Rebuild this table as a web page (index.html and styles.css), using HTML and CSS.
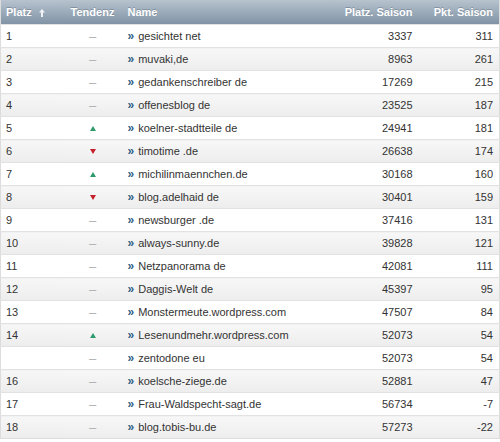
FILE: index.html
```html
<!DOCTYPE html>
<html>
<head>
<meta charset="utf-8">
<link rel="stylesheet" href="styles.css">
</head>
<body>
<table class="rank">
  <colgroup>
    <col class="c-platz"><col class="c-tend"><col class="c-name"><col class="c-ps"><col class="c-pkt">
  </colgroup>
  <thead>
    <tr>
      <th class="platz">Platz <svg class="sort" width="6" height="8" viewBox="0 0 6 8"><path d="M3 0 L6 3.5 L4 3.5 L4 8 L2 8 L2 3.5 L0 3.5 Z" fill="#fff" opacity="0.85"/></svg></th>
      <th class="tend">Tendenz</th>
      <th class="name">Name</th>
      <th class="num ps">Platz. Saison</th>
      <th class="num last">Pkt. Saison</th>
    </tr>
  </thead>
  <tbody>
    <tr><td>1</td><td class="tend"><span class="dash">–</span></td><td class="name"><span class="go">»</span>gesichtet net</td><td class="num ps">3337</td><td class="num last">311</td></tr>
    <tr><td>2</td><td class="tend"><span class="dash">–</span></td><td class="name"><span class="go">»</span>muvaki,de</td><td class="num ps">8963</td><td class="num last">261</td></tr>
    <tr><td>3</td><td class="tend"><span class="dash">–</span></td><td class="name"><span class="go">»</span>gedankenschreiber de</td><td class="num ps">17269</td><td class="num last">215</td></tr>
    <tr><td>4</td><td class="tend"><span class="dash">–</span></td><td class="name"><span class="go">»</span>offenesblog de</td><td class="num ps">23525</td><td class="num last">187</td></tr>
    <tr><td>5</td><td class="tend"><span class="up"></span></td><td class="name"><span class="go">»</span>koelner-stadtteile de</td><td class="num ps">24941</td><td class="num last">181</td></tr>
    <tr><td>6</td><td class="tend"><span class="down"></span></td><td class="name"><span class="go">»</span>timotime .de</td><td class="num ps">26638</td><td class="num last">174</td></tr>
    <tr><td>7</td><td class="tend"><span class="up"></span></td><td class="name"><span class="go">»</span>michilinmaennchen.de</td><td class="num ps">30168</td><td class="num last">160</td></tr>
    <tr><td>8</td><td class="tend"><span class="down"></span></td><td class="name"><span class="go">»</span>blog.adelhaid de</td><td class="num ps">30401</td><td class="num last">159</td></tr>
    <tr><td>9</td><td class="tend"><span class="dash">–</span></td><td class="name"><span class="go">»</span>newsburger .de</td><td class="num ps">37416</td><td class="num last">131</td></tr>
    <tr><td>10</td><td class="tend"><span class="dash">–</span></td><td class="name"><span class="go">»</span>always-sunny.de</td><td class="num ps">39828</td><td class="num last">121</td></tr>
    <tr><td>11</td><td class="tend"><span class="dash">–</span></td><td class="name"><span class="go">»</span>Netzpanorama de</td><td class="num ps">42081</td><td class="num last">111</td></tr>
    <tr><td>12</td><td class="tend"><span class="dash">–</span></td><td class="name"><span class="go">»</span>Daggis-Welt de</td><td class="num ps">45397</td><td class="num last">95</td></tr>
    <tr><td>13</td><td class="tend"><span class="dash">–</span></td><td class="name"><span class="go">»</span>Monstermeute.wordpress.com</td><td class="num ps">47507</td><td class="num last">84</td></tr>
    <tr><td>14</td><td class="tend"><span class="up"></span></td><td class="name"><span class="go">»</span>Lesenundmehr.wordpress.com</td><td class="num ps">52073</td><td class="num last">54</td></tr>
    <tr><td></td><td class="tend"><span class="dash">–</span></td><td class="name"><span class="go">»</span>zentodone eu</td><td class="num ps">52073</td><td class="num last">54</td></tr>
    <tr><td>16</td><td class="tend"><span class="dash">–</span></td><td class="name"><span class="go">»</span>koelsche-ziege.de</td><td class="num ps">52881</td><td class="num last">47</td></tr>
    <tr><td>17</td><td class="tend"><span class="dash">–</span></td><td class="name"><span class="go">»</span>Frau-Waldspecht-sagt.de</td><td class="num ps">56734</td><td class="num last">-7</td></tr>
    <tr><td>18</td><td class="tend"><span class="dash">–</span></td><td class="name"><span class="go">»</span>blog.tobis-bu.de</td><td class="num ps">57273</td><td class="num last">-22</td></tr>
  </tbody>
</table>
</body>
</html>
```

FILE: styles.css
```css
html, body {
  margin: 0;
  padding: 0;
  background: #fff;
}
.rank {
  width: 499px;
  border-collapse: collapse;
  font-family: "Liberation Sans", Arial, Helvetica, sans-serif;
  font-size: 11px;
  color: #333;
  border-left: 1px solid #dcdcdc;
  border-right: 1px solid #dcdcdc;
  border-bottom: 1px solid #dcdcdc;
  table-layout: fixed;
}
.c-platz { width: 62px; }
.c-tend { width: 60px; }
.c-name { width: 210px; }
.c-ps { width: 89px; }
.c-pkt { width: 78px; }
thead th {
  height: 24px;
  padding: 0;
  background: linear-gradient(#b7c3ce, #8093a5);
  color: #fff;
  font-weight: bold;
  font-size: 11px;
  text-align: left;
  text-shadow: 0 -1px 0 rgba(60, 80, 100, 0.35);
}
thead th.platz { padding-left: 5px; }
thead th.tend { text-align: center; }
thead th.name { padding-left: 5px; }
.rank th.num, .rank td.num { text-align: right; padding-left: 0; }
.rank th.ps, .rank td.ps { padding-right: 9px; }
.rank th.last, .rank td.last { padding-right: 6px; }
.sort { margin-left: 4px; vertical-align: -1px; }
tbody td {
  height: 22px;
  padding: 0 0 0 5px;
  border-top: 1px solid #e2e2e2;
  white-space: nowrap;
}
tbody td.tend { text-align: center; padding-left: 0; }
tbody td.name { padding-left: 5px; }
tbody tr:nth-child(even) td {
  background: linear-gradient(#f7f7f7, #ededed);
}
.dash { color: #b0b0b0; font-size: 13px; }
.go {
  color: #2f5f86;
  font-weight: bold;
  margin-right: 4px;
  font-size: 12px;
}
.up, .down {
  display: inline-block;
  width: 0;
  height: 0;
  border-left: 3.5px solid transparent;
  border-right: 3.5px solid transparent;
  vertical-align: 1px;
}
.up { border-bottom: 5px solid #2e9a6c; }
.down { border-top: 5px solid #c41f2a; }
```
